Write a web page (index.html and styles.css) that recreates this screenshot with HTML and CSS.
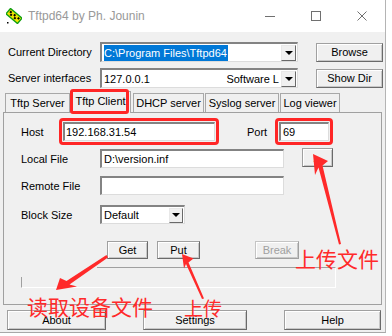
FILE: index.html
```html
<!DOCTYPE html>
<html>
<head>
<meta charset="utf-8">
<title>Tftpd64</title>
<link rel="stylesheet" href="styles.css">
</head>
<body>
<div class="window">
  <div class="titlebar">
    <svg class="app-icon" viewBox="0 0 16 16">
      <g transform="rotate(40 8 8)">
        <rect x="0.5" y="4.5" width="15" height="7" fill="#f2e600" stroke="#12a012" stroke-width="1.4"/>
        <rect x="2" y="6" width="2" height="2" fill="#000"/>
        <rect x="4" y="8" width="2" height="2" fill="#000"/>
        <rect x="7" y="6" width="2" height="2" fill="#000"/>
        <rect x="9" y="8" width="2" height="2" fill="#000"/>
        <rect x="12" y="6" width="2" height="2" fill="#000"/>
      </g>
      <rect x="1" y="14" width="1.5" height="1.5" fill="#000"/>
    </svg>
    <span class="title">Tftpd64 by Ph. Jounin</span>
    <div class="controls">
      <span class="ctl"><svg viewBox="0 0 10 10"><line x1="0" y1="5.5" x2="10" y2="5.5" stroke="#707070" stroke-width="1"/></svg></span>
      <span class="ctl"><svg viewBox="0 0 10 10"><rect x="0.5" y="0.5" width="9" height="9" fill="none" stroke="#707070" stroke-width="1"/></svg></span>
      <span class="ctl"><svg viewBox="0 0 10 10"><path d="M0.5 0.5 L9.5 9.5 M9.5 0.5 L0.5 9.5" stroke="#707070" stroke-width="1"/></svg></span>
    </div>
  </div>

  <div class="row row1">
    <span class="lbl-top">Current Directory</span>
    <div class="combo">
      <span class="sel">C:\Program Files\Tftpd64</span>
      <span class="drop"></span>
    </div>
    <button class="btn side">Browse</button>
  </div>
  <div class="row row2">
    <span class="lbl-top">Server interfaces</span>
    <div class="combo">
      <span class="combo-text">127.0.0.1</span>
      <span class="combo-right">Software L</span>
      <span class="drop"></span>
    </div>
    <button class="btn side">Show Dir</button>
  </div>

  <div class="tabs">
    <div class="tab t-server">Tftp Server</div>
    <div class="tab t-client active">Tftp Client</div>
    <div class="tab t-dhcp">DHCP server</div>
    <div class="tab t-syslog">Syslog server</div>
    <div class="tab t-log">Log viewer</div>
  </div>

  <div class="panel">
    <div class="prow host-row">
      <span class="plbl host-lbl">Host</span>
      <span class="hl"><span class="field host-field">192.168.31.54</span></span>
      <span class="port-lbl">Port</span>
      <span class="hl"><span class="field port-field">69</span></span>
    </div>
    <div class="prow gap8">
      <span class="plbl">Local File</span>
      <span class="field file-field">D:\version.inf</span>
      <button class="btn dots">...</button>
    </div>
    <div class="prow gap8">
      <span class="plbl">Remote File</span>
      <span class="field file-field"></span>
    </div>
    <div class="prow gap10">
      <span class="plbl">Block Size</span>
      <div class="combo block">
        <span class="combo-text">Default</span>
        <span class="drop"></span>
      </div>
    </div>
    <div class="prow btn-row">
      <button class="btn get">Get</button>
      <button class="btn put">Put</button>
      <button class="btn brk disabled">Break</button>
    </div>
    <div class="prow progress-row">
      <span class="status"></span>
      <span class="progress"></span>
    </div>
  </div>

  <div class="footer">
    <button class="btn about">About</button>
    <button class="btn settings">Settings</button>
    <button class="btn help">Help</button>
  </div>
</div>

<svg class="arrows" width="392" height="336" viewBox="0 0 392 336">
  <polygon points="313,154 328,161 322.5,165.5 341,244 339,244.5 318.5,167.5 315,175" fill="#ff2a2a"/>
  <polygon points="56,290 60,278 66.5,281 106.5,255 108,257.5 69.5,284.5 77,286.5" fill="#ff2a2a"/>
  <polygon points="182,254 193.5,258.5 188.5,262.5 204,298.5 202,299 186,264 184,268.5" fill="#ff2a2a"/>
</svg>
<span class="note note-upload-file">上传文件</span>
<span class="note note-read">读取设备文件</span>
<span class="note note-upload">上传</span>
</body>
</html>
```
FILE: styles.css
```css
* { box-sizing: border-box; }
html, body { margin: 0; padding: 0; }
body {
  width: 392px;
  height: 336px;
  overflow: hidden;
  position: relative;
  background: #ffffff;
  font-family: "Liberation Sans", Arial, sans-serif;
  font-size: 11px;
  color: #000;
}
.window {
  width: 386px;
  height: 333px;
  background: #f0f0f0;
  border-right: 1px solid #b4b4b4;
  border-bottom: 1px solid #a8a8a8;
}
.titlebar {
  height: 32px;
  background: #fff;
  display: flex;
  align-items: center;
}
.app-icon { width: 16px; height: 16px; margin-left: 6px; }
.title {
  margin-left: 6px;
  flex: 1;
  font-size: 12px;
  color: #999;
}
.controls { display: flex; height: 32px; }
.ctl {
  width: 46px;
  height: 32px;
  display: flex;
  align-items: center;
  justify-content: center;
}
.ctl svg { width: 10px; height: 10px; display: block; }

.row {
  display: flex;
  align-items: center;
  height: 20px;
  padding-left: 8px;
}
.row1 { margin-top: 10px; }
.row2 { margin-top: 6px; }
.lbl-top { width: 92px; white-space: nowrap; }

.combo {
  width: 198px;
  height: 20px;
  display: flex;
  align-items: center;
  background: #fff;
  border-style: solid;
  border-width: 2px 1px 1px 2px;
  border-color: #838383 #dcdcdc #dcdcdc #838383;
  padding: 0 0 0 2px;
  white-space: nowrap;
  overflow: hidden;
}
.combo.block { width: 85px; height: 19px; }
.sel {
  background: #0078d7;
  color: #fff;
  height: 16px;
  line-height: 16px;
  padding: 0 1px 0 0;
}
.combo-text { flex: 1; }
.combo-right { padding-right: 2px; }
.drop {
  margin-left: auto;
  margin-right: 1px;
  width: 15px;
  height: 16px;
  flex: none;
  background: #f0f0f0;
  border: 1px solid;
  border-color: #e8e8e8 #696969 #696969 #e8e8e8;
  display: flex;
  align-items: center;
  justify-content: center;
}
.block .drop { width: 14px; height: 15px; }
.drop::before {
  content: "";
  border-left: 4px solid transparent;
  border-right: 4px solid transparent;
  border-top: 4px solid #000;
}

.btn {
  font-family: "Liberation Sans", Arial, sans-serif;
  font-size: 11px;
  color: #000;
  background: #f0f0f0;
  border: 1px solid;
  border-color: #a0a0a0 #6a6a6a #6a6a6a #a0a0a0;
  box-shadow: inset 1px 1px #ffffff, inset -1px -1px #c8c8c8;
  padding: 0;
  height: 19px;
  flex: none;
}
.btn.side { margin-left: 18px; width: 67px; }
.btn.disabled {
  color: #a0a0a0;
  border-color: #c4c4c4 #a0a0a0 #a0a0a0 #c4c4c4;
}

.tabs {
  display: flex;
  align-items: flex-end;
  height: 21px;
  margin-top: 3px;
  margin-left: 5px;
  position: relative;
  z-index: 1;
}
.tab {
  height: 19px;
  background: #f0f0f0;
  border: 1px solid #a8a8a8;
  border-bottom: none;
  display: flex;
  align-items: center;
  justify-content: center;
  white-space: nowrap;
  flex: none;
}
.t-server { width: 65px; }
.t-client { width: 61px; }
.t-dhcp { width: 71px; margin-left: 2px; }
.t-syslog { width: 74px; margin-left: 1px; }
.t-log { width: 60px; margin-left: 1px; }
.tab.active {
  height: 22px;
  margin-bottom: -1px;
  padding-bottom: 3px;
  position: relative;
}
.tab.active::after {
  content: "";
  position: absolute;
  left: -1px;
  right: 1px;
  top: -3px;
  bottom: -1px;
  border: 3px solid #ff2626;
  border-radius: 3px;
}

.panel {
  margin-left: 3px;
  width: 379px;
  height: 193px;
  border: 1px solid #a0a0a0;
  padding: 9px 0 0 17px;
}
.prow { display: flex; align-items: center; }
.plbl { width: 79px; white-space: nowrap; }
.plbl.host-lbl { width: 42px; }
.field {
  display: flex;
  align-items: center;
  height: 19px;
  background: #fff;
  border-style: solid;
  border-width: 2px 1px 1px 2px;
  border-color: #838383 #dcdcdc #dcdcdc #838383;
  padding-left: 2px;
  white-space: nowrap;
}
.hl { position: relative; display: flex; }
.hl::after {
  content: "";
  position: absolute;
  left: -4px;
  right: -4px;
  top: -4px;
  bottom: -4px;
  border: 3px solid #ff2626;
  border-radius: 4px;
}
.host-field { width: 152px; padding-left: 1px; }
.port-lbl { margin-left: 32px; width: 32px; }
.port-field { width: 50px; }
.file-field { width: 184px; }
.gap8 { margin-top: 8px; }
.gap10 { margin-top: 10px; }
.btn.dots { margin-left: 18px; width: 31px; height: 19px; margin-top: -2px; }

.btn-row { margin-top: 17px; }
.btn-row .btn { height: 18px; }
.btn.get { margin-left: 86px; width: 41px; }
.btn.put { margin-left: 9px; width: 43px; }
.btn.brk { margin-left: 55px; width: 44px; }

.progress-row { margin-top: 8px; align-items: flex-end; height: 21px; }
.status {
  width: 76px;
  height: 11px;
  border-left: 1px solid #a0a0a0;
  border-bottom: 1px solid #ffffff;
}
.progress {
  width: 239px;
  height: 21px;
  border-top: 1px solid #a0a0a0;
  border-right: 1px solid #ffffff;
  border-bottom: 1px solid #ffffff;
}

.footer {
  display: flex;
  margin-top: 5px;
}
.footer .btn { height: 20px; }
.btn.about { margin-left: 7px; width: 99px; }
.btn.settings { margin-left: 37px; width: 104px; }
.btn.help { margin-left: 37px; width: 97px; }

.arrows {
  position: absolute;
  left: 0;
  top: 0;
  pointer-events: none;
}
.note {
  position: absolute;
  font-family: "Noto Sans CJK SC", "Noto Sans", sans-serif;
  color: #ff2a2a;
  line-height: 1;
  white-space: nowrap;
}
.note-upload-file { left: 295px; top: 248px; font-size: 21px; }
.note-read { left: 27px; top: 296px; font-size: 21px; }
.note-upload { left: 184px; top: 298px; font-size: 19px; }
```
